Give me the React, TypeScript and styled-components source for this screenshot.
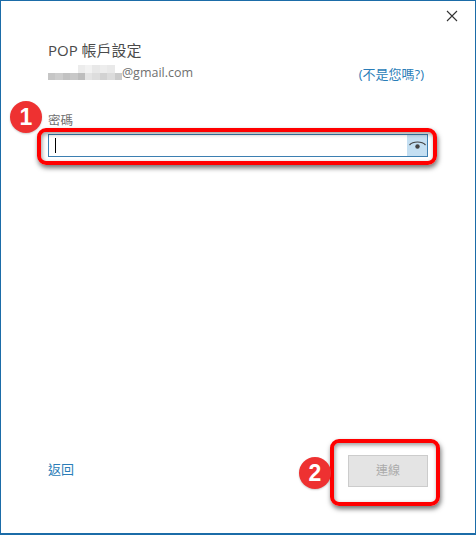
import styled, { createGlobalStyle } from 'styled-components';

const GlobalStyle = createGlobalStyle`
  html, body {
    margin: 0;
    padding: 0;
    background: #fff;
  }
`;

const Dialog = styled.div`
  position: relative;
  box-sizing: border-box;
  width: 476px;
  height: 535px;
  display: flex;
  flex-direction: column;
  padding: 0 47px 0 47px;
  background: #fff;
  border: 1px solid #1b6ca8;
  border-bottom-width: 2px;
  font-family: 'Segoe UI', 'Open Sans', 'Noto Sans CJK TC', sans-serif;
  overflow: hidden;
`;

const CloseButton = styled.button`
  align-self: flex-end;
  width: 14px;
  height: 14px;
  margin: 8px -31px 0 0;
  padding: 0;
  border: 0;
  background: none;
  color: #333;
  display: flex;
`;

const Title = styled.div`
  margin-top: 17px;
  font-size: 15px;
  line-height: 20px;
  color: #4a4a4a;
`;

const AccountRow = styled.div`
  display: flex;
  align-items: flex-end;
  justify-content: space-between;
  margin-top: 3px;
  height: 20px;
`;

const Email = styled.div`
  display: flex;
  align-items: flex-end;
  margin-bottom: 2px;
  font-size: 12.5px;
  line-height: 16px;
  color: #707070;
`;

const Mosaic = styled.div`
  display: grid;
  grid-template-columns: repeat(10, 7.4px);
  grid-template-rows: 8px 7px;
  margin: 0 0 1px 0;
`;

const MosaicCell = styled.span<{ $shade: string }>`
  background: ${(p) => p.$shade};
`;

const Link = styled.a`
  font-size: 13px;
  line-height: 16px;
  color: #2a7db8;
`;

const NotYouLink = styled(Link)`
  margin: 0 4px 1px 0;
`;

const BackLink = styled(Link)`
  margin-bottom: 5px;
`;

const FieldLabel = styled.label`
  margin-top: 30px;
  font-size: 12.5px;
  line-height: 16px;
  color: #707070;
`;

const PasswordBox = styled.div`
  display: flex;
  height: 23px;
  margin-top: 5px;
  box-sizing: border-box;
  border: 1px solid #3c7fb1;
`;

const Caret = styled.div`
  width: 1px;
  height: 15px;
  margin: 3px 0 0 6px;
  background: #000;
`;

const RevealButton = styled.button`
  margin-left: auto;
  width: 20px;
  padding: 0;
  border: 0;
  background: #c4dff2;
  color: #444;
  display: flex;
  align-items: center;
  justify-content: center;
`;

const Footer = styled.div`
  margin-top: auto;
  margin-bottom: 46px;
  display: flex;
  align-items: center;
  justify-content: space-between;
`;

const ConnectButton = styled.button`
  box-sizing: border-box;
  width: 80px;
  height: 32px;
  padding: 0 0 2px;
  border: 1px solid #ccc;
  background: #e4e4e4;
  color: #ababab;
  font-family: inherit;
  font-size: 12px;
`;

const Highlight = styled.div<{ $left: number; $top: number; $width: number; $height: number }>`
  position: absolute;
  box-sizing: border-box;
  left: ${(p) => p.$left}px;
  top: ${(p) => p.$top}px;
  width: ${(p) => p.$width}px;
  height: ${(p) => p.$height}px;
  border: 4px solid #f00;
  border-radius: 9px;
  box-shadow: 1px 3px 5px rgba(0, 0, 0, 0.55), inset 1px 2px 4px rgba(0, 0, 0, 0.4);
  pointer-events: none;
`;

const Badge = styled.div<{ $left: number; $top: number }>`
  position: absolute;
  left: ${(p) => p.$left}px;
  top: ${(p) => p.$top}px;
  width: 32px;
  height: 32px;
  border-radius: 50%;
  background: #ee3131;
  color: #fff;
  font-family: 'Liberation Sans', sans-serif;
  font-weight: 700;
  font-size: 23px;
  line-height: 32px;
  text-align: center;
  box-shadow: 0 1px 2px rgba(0, 0, 0, 0.2);
`;

const topShades = ['transparent', 'transparent', 'transparent', 'transparent', '#ececec', '#f2f2f2', '#e8e8e8', '#ededed', '#e9e9e9', 'transparent'];
const bottomShades = ['#c6c6c6', '#cdcdcd', '#c2c2c2', '#c8c8c8', '#bdbdbd', '#e4e4e4', '#dddddd', '#d2d2d2', '#dcdcdc', '#cbcbcb'];

const App = () => {
  return (
    <>
      <GlobalStyle />
      <Dialog>
        <CloseButton aria-label="關閉">
          <svg width="14" height="14" viewBox="0 0 14 14" fill="none" stroke="currentColor" strokeWidth="1.1">
            <path d="M2 2 L12 12 M12 2 L2 12" />
          </svg>
        </CloseButton>
        <Title>POP 帳戶設定</Title>
        <AccountRow>
          <Email>
            <Mosaic>
              {[...topShades, ...bottomShades].map((shade, i) => (
                <MosaicCell key={i} $shade={shade} />
              ))}
            </Mosaic>
            @gmail.com
          </Email>
          <NotYouLink>(不是您嗎?)</NotYouLink>
        </AccountRow>
        <FieldLabel>密碼</FieldLabel>
        <PasswordBox>
          <Caret />
          <RevealButton aria-label="顯示密碼">
            <svg width="17" height="12" viewBox="0 0 17 12" fill="none">
              <path d="M0.5 5 C4 1 13 1 16.5 5" stroke="currentColor" strokeWidth="1.2" />
              <circle cx="8.5" cy="6.5" r="2.2" fill="currentColor" />
            </svg>
          </RevealButton>
        </PasswordBox>
        <Footer>
          <BackLink>返回</BackLink>
          <ConnectButton disabled>連線</ConnectButton>
        </Footer>
        <Highlight $left={36} $top={127} $width={400} $height={37} />
        <Highlight $left={329} $top={438} $width={110} $height={67} />
        <Badge $left={9} $top={100}>1</Badge>
        <Badge $left={298} $top={456}>2</Badge>
      </Dialog>
    </>
  );
};

export default App;
